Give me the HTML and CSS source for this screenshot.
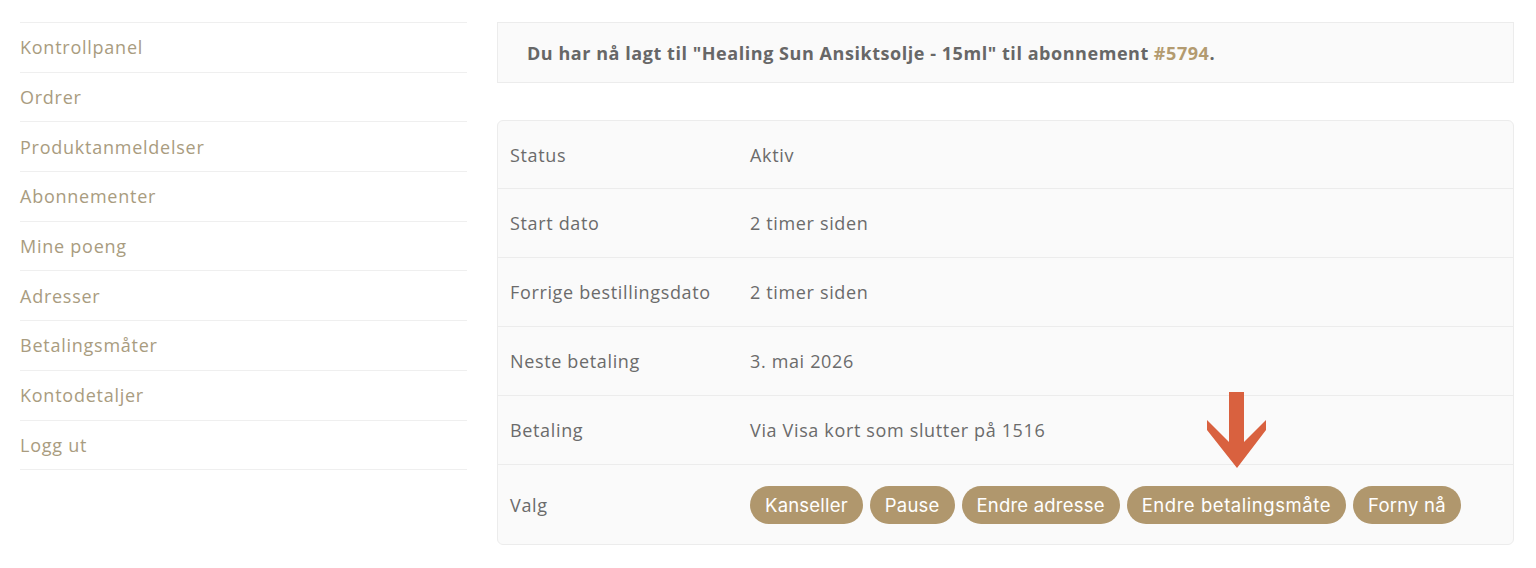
FILE: index.html
```html
<!DOCTYPE html>
<html lang="no">
<head>
<meta charset="utf-8">
<title>Abonnement</title>
<link rel="stylesheet" href="styles.css">
</head>
<body>
<div class="page">
  <nav class="account-nav">
    <ul>
      <li><a href="#">Kontrollpanel</a></li>
      <li><a href="#">Ordrer</a></li>
      <li><a href="#">Produktanmeldelser</a></li>
      <li><a href="#">Abonnementer</a></li>
      <li><a href="#">Mine poeng</a></li>
      <li><a href="#">Adresser</a></li>
      <li><a href="#">Betalingsmåter</a></li>
      <li><a href="#">Kontodetaljer</a></li>
      <li><a href="#">Logg ut</a></li>
    </ul>
  </nav>
  <main class="content">
    <div class="notice">Du har nå lagt til "Healing Sun Ansiktsolje - 15ml" til abonnement <a href="#">#5794</a>.</div>
    <div class="details-wrap">
      <table class="details">
        <tr><td class="label">Status</td><td>Aktiv</td></tr>
        <tr><td class="label">Start dato</td><td>2 timer siden</td></tr>
        <tr><td class="label">Forrige bestillingsdato</td><td>2 timer siden</td></tr>
        <tr><td class="label">Neste betaling</td><td>3. mai 2026</td></tr>
        <tr><td class="label">Betaling</td><td>Via Visa kort som slutter på 1516</td></tr>
        <tr class="actions-row"><td class="label">Valg</td><td>
          <div class="actions">
            <a class="btn" href="#">Kanseller</a>
            <a class="btn" href="#">Pause</a>
            <a class="btn" href="#">Endre adresse</a>
            <a class="btn btn-wide" href="#">Endre betalingsmåte</a>
            <a class="btn" href="#">Forny nå</a>
          </div>
        </td></tr>
      </table>
      <svg class="arrow" width="62" height="80" viewBox="1205 390 62 80" aria-hidden="true">
        <polygon fill="#d9613f" points="1229,392 1244,392 1244,442 1266,420 1266,430 1237,468 1207,430 1207,420 1229,442"/>
      </svg>
    </div>
  </main>
</div>
</body>
</html>
```
FILE: styles.css
```css
html, body {
  margin: 0;
  padding: 0;
  background: #ffffff;
}
body {
  font-family: "Open Sans", "DejaVu Sans", sans-serif;
  color: #6a6a6a;
}
.page {
  display: flex;
  gap: 30px;
  padding: 22px 22px 0 20px;
}
.account-nav {
  width: 447px;
  flex: none;
}
.account-nav ul {
  list-style: none;
  margin: 0;
  padding: 0;
  border-top: 1px solid #efefef;
}
.account-nav li {
  border-bottom: 1px solid #efefef;
  height: 48.7px;
  display: flex;
  align-items: center;
}
.account-nav a {
  color: #a99c80;
  text-decoration: none;
  font-size: 18px;
  letter-spacing: 0.75px;
}
.content {
  flex: 1;
  min-width: 0;
}
.notice {
  background: #fafafa;
  border: 1px solid #ececec;
  height: 59px;
  display: flex;
  align-items: center;
  padding: 0 29px;
  font-weight: 700;
  font-size: 18px;
  letter-spacing: 0.55px;
  color: #676767;
}
.notice a {
  color: #b39b70;
  text-decoration: none;
  margin-left: 0.28em;
}
.details-wrap {
  position: relative;
  margin-top: 37px;
}
.details {
  width: 100%;
  border-collapse: separate;
  border-spacing: 0;
  background: #fafafa;
  border: 1px solid #ececec;
  border-radius: 6px;
  font-size: 18px;
  letter-spacing: 0.65px;
  color: #6b6b6b;
}
.details td {
  height: 68px;
  padding: 0 12px;
  border-top: 1px solid #ececec;
  vertical-align: middle;
}
.details tr:first-child td {
  border-top: none;
  height: 67px;
}
.details td.label {
  width: 216px;
  white-space: nowrap;
}
.details .actions-row td {
  height: 79px;
}
.actions {
  display: flex;
  gap: 7px;
  padding-top: 1px;
}
.btn {
  display: inline-flex;
  align-items: center;
  height: 38px;
  padding: 0 15px;
  border-radius: 19px;
  background: #b0976d;
  color: #ffffff;
  text-decoration: none;
  font-family: "Inter", "Open Sans", sans-serif;
  font-size: 18.5px;
  letter-spacing: 0.2px;
}
.btn-wide {
  letter-spacing: 0.55px;
}
.arrow {
  position: absolute;
  left: 708px;
  top: 270px;
}
```
